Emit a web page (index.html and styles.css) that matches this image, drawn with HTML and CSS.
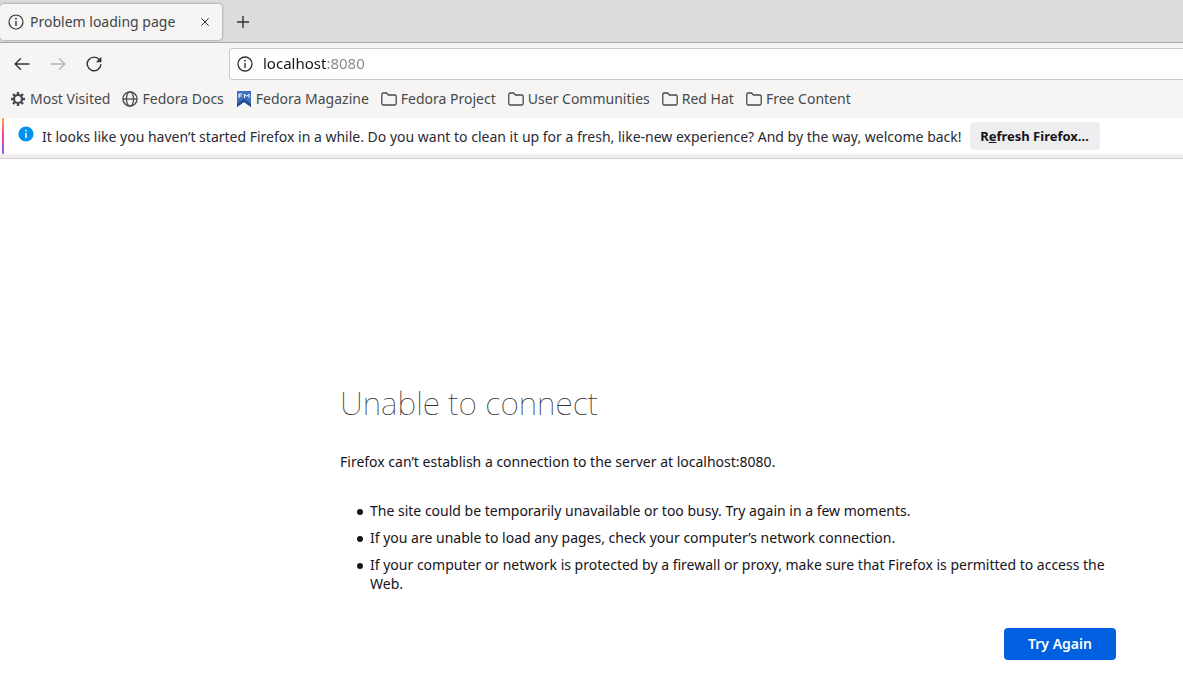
FILE: index.html
```html
<!DOCTYPE html>
<html lang="en">
<head>
<meta charset="utf-8">
<title>Problem loading page</title>
<link rel="stylesheet" href="styles.css">
</head>
<body>
<header class="chrome">
  <div class="tabs" role="tablist">
    <div class="tab" role="tab" aria-selected="true">
      <svg class="icon" viewBox="0 0 16 16"><circle cx="8" cy="8" r="7" fill="none" stroke="currentColor" stroke-width="1.2"/><path d="M8 7v5" stroke="currentColor" stroke-width="1.4"/><circle cx="8" cy="4.700" r=".9" fill="currentColor"/></svg>
      <span class="tab-title">Problem loading page</span>
      <button class="tab-close" aria-label="Close tab"><svg class="icon-small" viewBox="0 0 10 10"><path d="M1.300 1.300l7.400 7.400M8.700 1.300L1.300 8.700" stroke="currentColor" stroke-width="1"/></svg></button>
    </div>
    <button class="new-tab" aria-label="New tab"><svg class="icon-plus" viewBox="0 0 12 12"><path d="M6 0v12M0 6h12" stroke="currentColor" stroke-width="1.400"/></svg></button>
  </div>
  <nav class="toolbar">
    <button class="tool" aria-label="Back"><svg class="icon" viewBox="0 0 16 16" fill="none" stroke="currentColor" stroke-width="1.300" stroke-linecap="round" stroke-linejoin="round"><path d="M15 8H1M6.500 2.700L1 8l5.500 5.300"/></svg></button>
    <button class="tool" aria-label="Forward" disabled><svg class="icon" viewBox="0 0 16 16" fill="none" stroke="currentColor" stroke-width="1.300" stroke-linecap="round" stroke-linejoin="round"><path d="M1 8h14M9.500 2.700L15 8l-5.500 5.300"/></svg></button>
    <button class="tool" aria-label="Reload"><svg class="icon" viewBox="0 0 16 16"><path d="M13.200 3.500A6.800 6.800 0 1 0 14.800 8.800" fill="none" stroke="currentColor" stroke-width="1.400" stroke-linecap="round"/><path d="M15.400.8v5.400H10z" fill="currentColor"/></svg></button>
    <label class="address">
      <svg class="icon" viewBox="0 0 16 16"><circle cx="8" cy="8" r="7" fill="none" stroke="currentColor" stroke-width="1.300"/><path d="M8 7v5" stroke="currentColor" stroke-width="1.400"/><circle cx="8" cy="4.700" r=".9" fill="currentColor"/></svg>
      <input class="address-input" type="text" value="localhost:8080" aria-label="Address" spellcheck="false">
    </label>
  </nav>
  <nav class="bookmarks" aria-label="Bookmarks">
    <a class="bookmark" href="#"><svg class="icon" viewBox="0 0 16 16"><g stroke="currentColor" stroke-width="2.400"><path d="M8 1v14M1 8h14M3 3l10 10M13 3L3 13"/></g><circle cx="8" cy="8" r="4" fill="#f6f5f4" stroke="currentColor" stroke-width="2.200"/></svg>Most Visited</a>
    <a class="bookmark" href="#"><svg class="icon" viewBox="0 0 16 16" fill="none" stroke="currentColor" stroke-width="1.300"><circle cx="8" cy="8" r="7.100"/><ellipse cx="8" cy="8" rx="3.600" ry="7.100"/><path d="M1 8h14"/></svg>Fedora Docs</a>
    <a class="bookmark" href="#"><svg class="icon" viewBox="0 0 16 16"><path d="M1 0h14v16l-7-5-7 5z" fill="#3b6fc0"/><path d="M1 16v-3l7-5 7 5v3l-7-5z" fill="#244d8c"/><path d="M3 7V3h3.200M3 5h2.700M8.500 7V3l2.200 2.400L13 3v4" fill="none" stroke="#fff" stroke-width="1"/></svg>Fedora Magazine</a>
    <a class="bookmark" href="#"><svg class="icon" viewBox="0 0 16 16"><path d="M.8 12.500v-9Q.8 2 2.300 2h3.200L7.500 4h6.200q1.500 0 1.500 1.500v7q0 1.500-1.500 1.500H2.300Q.8 14 .8 12.500z" fill="none" stroke="currentColor" stroke-width="1.300"/></svg>Fedora Project</a>
    <a class="bookmark" href="#"><svg class="icon" viewBox="0 0 16 16"><path d="M.8 12.500v-9Q.8 2 2.300 2h3.200L7.500 4h6.200q1.500 0 1.500 1.500v7q0 1.500-1.500 1.500H2.300Q.8 14 .8 12.500z" fill="none" stroke="currentColor" stroke-width="1.300"/></svg>User Communities</a>
    <a class="bookmark" href="#"><svg class="icon" viewBox="0 0 16 16"><path d="M.8 12.500v-9Q.8 2 2.300 2h3.200L7.500 4h6.200q1.500 0 1.500 1.500v7q0 1.500-1.500 1.500H2.300Q.8 14 .8 12.500z" fill="none" stroke="currentColor" stroke-width="1.300"/></svg>Red Hat</a>
    <a class="bookmark" href="#"><svg class="icon" viewBox="0 0 16 16"><path d="M.8 12.500v-9Q.8 2 2.300 2h3.200L7.500 4h6.200q1.500 0 1.500 1.500v7q0 1.500-1.500 1.500H2.300Q.8 14 .8 12.500z" fill="none" stroke="currentColor" stroke-width="1.300"/></svg>Free Content</a>
  </nav>
  <div class="notice" role="status">
    <svg class="icon notice-icon" viewBox="0 0 16 16"><circle cx="8" cy="8" r="7.600" fill="#0090ed"/><path d="M8 7v5" stroke="#fff" stroke-width="1.500"/><circle cx="8" cy="4.700" r=".9" fill="#fff"/></svg>
    <span class="notice-text">It looks like you haven’t started Firefox in a while. Do you want to clean it up for a fresh, like-new experience? And by the way, welcome back!</span>
    <button class="refresh">R<u>e</u>fresh Firefox…</button>
  </div>
</header>
<main class="page">
  <h1 class="title">Unable to connect</h1>
  <p class="lead">Firefox can’t establish a connection to the server at localhost:8080.</p>
  <ul class="hints">
    <li>The site could be temporarily unavailable or too busy. Try again in a few moments.</li>
    <li>If you are unable to load any pages, check your computer’s network connection.</li>
    <li>If your computer or network is protected by a firewall or proxy, make sure that Firefox is permitted to access the Web.</li>
  </ul>
  <div class="actions"><button class="try">Try Again</button></div>
</main>
</body>
</html>
```
FILE: styles.css
```css
* { box-sizing: border-box; }
body {
  margin: 0;
  background: #fff;
  color: #15141a;
  font: 14px/20px "Noto Sans", "Open Sans", sans-serif;
}
button { font: inherit; border: 0; padding: 0; background: none; color: inherit; }
.icon { width: 16px; height: 16px; flex: none; }
.chrome { background: #f6f5f4; border-bottom: 1px solid #d5d0cc; color: #2e3436; }
.tabs {
  display: flex;
  align-items: center;
  height: 43px;
  padding-top: 1px;
  background: #dddcda;
  border-bottom: 1px solid #a9a7a4;
}
.tab {
  display: flex;
  align-items: center;
  gap: 6px;
  width: 222px;
  height: 36px;
  padding: 0 8px;
  background: #f6f5f4;
  border-radius: 4px;
  box-shadow: 0 0 3px #888;
}
.tab-title { flex: 1; white-space: nowrap; color: #3f4446; }
.tab-close, .new-tab { display: grid; place-items: center; width: 18px; height: 18px; }
.icon-small { width: 10px; height: 10px; }
.icon-plus { width: 12px; height: 12px; }
.new-tab { margin-left: 12px; }
.toolbar { display: flex; align-items: center; height: 41px; padding-left: 14px; gap: 20px; }
.tool { display: grid; place-items: center; width: 16px; height: 16px; }
.tool:disabled { color: #b4b4b3; }
.address {
  flex: 1;
  display: flex;
  align-items: center;
  gap: 10px;
  height: 32px;
  margin-left: 107px;
  padding-left: 7px;
  background: #fff;
  border: 1px solid #cdc7c2;
  border-right: 0;
  border-radius: 4px 0 0 4px;
}
.address-input {
  flex: 1;
  min-width: 0;
  padding: 0 0 2px;
  border: 0;
  outline: 0;
  font: inherit;
  font-size: 15px;
  background: linear-gradient(90deg, #15141a 63px, #85858a 63px);
  background-clip: text;
  -webkit-background-clip: text;
  -webkit-text-fill-color: transparent;
}
.bookmarks { display: flex; align-items: center; gap: 12px; height: 34px; padding: 0 10px 4px; }
.bookmark { display: flex; align-items: center; gap: 4px; color: #454a4c; text-decoration: none; white-space: nowrap; }
.notice {
  display: flex;
  align-items: center;
  height: 40px;
  padding-left: 18px;
  background: linear-gradient(#ffa436, #ff3fa0 50%, #9059ff) 2px 0 / 2px 100% no-repeat #fff;
  background-clip: padding-box;
  border-bottom: 4px solid #efeeed;
  color: #2b2a33;
}
.notice-icon { align-self: flex-start; margin-top: 8px; }
.notice-text { margin-left: 8px; padding-top: 2px; white-space: nowrap; }
.refresh {
  flex: none;
  width: 130px;
  height: 28px;
  margin-left: 8px;
  border-radius: 4px;
  background: #eeeef0;
  color: #15141a;
  font-size: 13px;
  font-weight: 700;
}
.page { padding: 219px 67px 16px 340px; }
.title { margin: 0; font-size: 32px; line-height: 50px; font-weight: 100; color: #333; }
.lead { margin: 24px 0 29px; }
.hints { margin: 0; padding-left: 17px; line-height: 19px; list-style: none; }
.hints li { display: flex; gap: 7px; margin-bottom: 8px; }
.hints li::before {
  content: "";
  flex: none;
  width: 6px;
  height: 6px;
  margin-top: 8px;
  border-radius: 50%;
  background: #15141a;
}
.actions { display: flex; justify-content: flex-end; margin-top: 35px; }
.try {
  width: 112px;
  height: 32px;
  border-radius: 4px;
  background: #0060df;
  color: #fff;
  font-weight: 600;
}
```
